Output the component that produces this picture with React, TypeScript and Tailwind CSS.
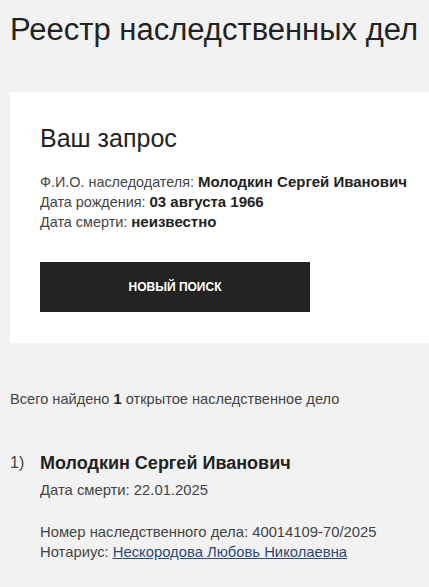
import React from 'react';

export default function App() {
  return (
    <div className="min-h-[587px] bg-[#f2f2f2] text-[#222] font-['Liberation_Sans',Arial,sans-serif]">
      <div className="pl-[10px] pt-[12px]">
        <h1 className="text-[31px] leading-[36px] font-normal text-[#222]">Реестр наследственных дел</h1>

        {/* Request card */}
        <div className="mt-[44px] bg-white px-[30px] pt-[32px] pb-[31px]">
          <h2 className="text-[25px] leading-[28px] font-normal text-[#222]">Ваш запрос</h2>
          <div className="mt-[20px] whitespace-nowrap text-[14.4px] leading-[20px] text-[#444]">
            <p>
              Ф.И.О. наследодателя: <b className="text-[15px] text-[#222]">Молодкин Сергей Иванович</b>
            </p>
            <p>
              Дата рождения: <b className="text-[15px] text-[#222]">03 августа 1966</b>
            </p>
            <p>
              Дата смерти: <b className="text-[15px] text-[#222]">неизвестно</b>
            </p>
          </div>
          <button className="mt-[30px] flex h-[50px] w-[270px] items-center justify-center bg-[#232323] text-[12px] font-bold text-white">
            НОВЫЙ ПОИСК
          </button>
        </div>

        <p className="mt-[46px] text-[14.6px] leading-[20px] text-[#444]">
          Всего найдено <b className="text-[#222]">1</b> открытое наследственное дело
        </p>

        {/* Result */}
        <div className="mt-[41px] flex">
          <div className="w-[30px] text-[16px] leading-[26px] text-[#444]">1)</div>
          <div className="flex-1">
            <div className="text-[18px] leading-[26px] font-bold text-[#222]">Молодкин Сергей Иванович</div>
            <p className="mt-[4px] text-[14.8px] leading-[20px] text-[#444]">Дата смерти: 22.01.2025</p>
            <div className="mt-[22px] text-[14.8px] leading-[20px] text-[#444]">
              <p>Номер наследственного дела: 40014109-70/2025</p>
              <p>
                Нотариус: <a href="#" className="text-[#2b4a78] underline">Нескородова Любовь Николаевна</a>
              </p>
            </div>
          </div>
        </div>
      </div>
    </div>
  );
}
